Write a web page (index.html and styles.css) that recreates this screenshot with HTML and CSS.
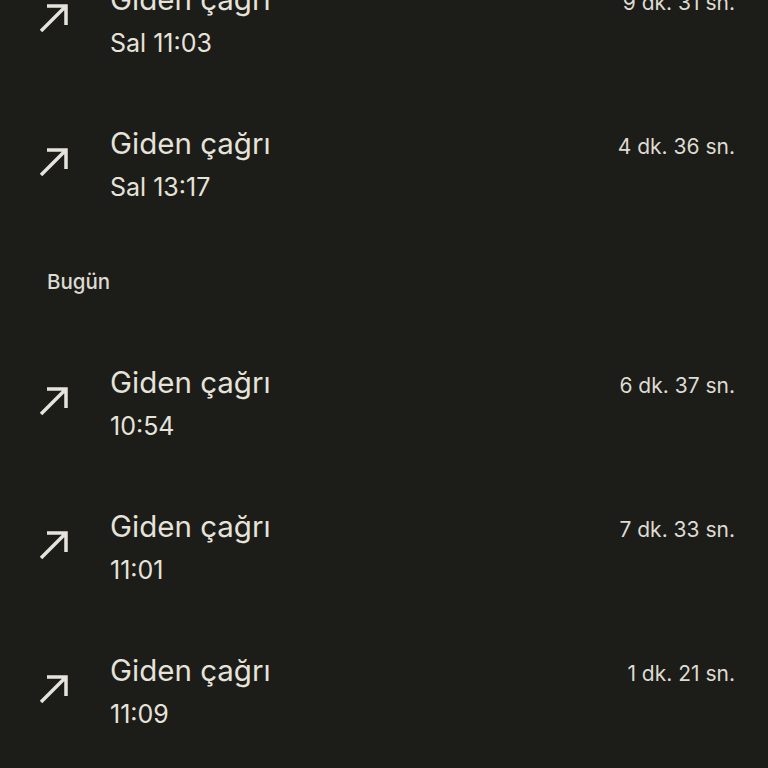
FILE: index.html
```html
<!DOCTYPE html>
<html lang="tr">
<head>
<meta charset="utf-8">
<link rel="stylesheet" href="styles.css">
</head>
<body>
<div class="list">
  <div class="row first">
    <svg class="icon" viewBox="0 0 32 32"><path d="M3 28 L28 3 M9 3 H28 V22" /></svg>
    <div class="text">
      <div class="top"><span class="title">Giden çağrı</span><span class="dur">9 dk. 31 sn.</span></div>
      <div class="sub">Sal 11:03</div>
    </div>
  </div>
  <div class="row">
    <svg class="icon" viewBox="0 0 32 32"><path d="M3 28 L28 3 M9 3 H28 V22" /></svg>
    <div class="text">
      <div class="top"><span class="title">Giden çağrı</span><span class="dur">4 dk. 36 sn.</span></div>
      <div class="sub">Sal 13:17</div>
    </div>
  </div>
  <div class="header">Bugün</div>
  <div class="row">
    <svg class="icon" viewBox="0 0 32 32"><path d="M3 28 L28 3 M9 3 H28 V22" /></svg>
    <div class="text">
      <div class="top"><span class="title">Giden çağrı</span><span class="dur">6 dk. 37 sn.</span></div>
      <div class="sub">10:54</div>
    </div>
  </div>
  <div class="row">
    <svg class="icon" viewBox="0 0 32 32"><path d="M3 28 L28 3 M9 3 H28 V22" /></svg>
    <div class="text">
      <div class="top"><span class="title">Giden çağrı</span><span class="dur">7 dk. 33 sn.</span></div>
      <div class="sub">11:01</div>
    </div>
  </div>
  <div class="row">
    <svg class="icon" viewBox="0 0 32 32"><path d="M3 28 L28 3 M9 3 H28 V22" /></svg>
    <div class="text">
      <div class="top"><span class="title">Giden çağrı</span><span class="dur">1 dk. 21 sn.</span></div>
      <div class="sub">11:09</div>
    </div>
  </div>
</div>
</body>
</html>
```
FILE: styles.css
```css
html, body {
  margin: 0;
  padding: 0;
  background: #1c1c19;
  overflow: hidden;
}
body {
  width: 768px;
  height: 768px;
  font-family: Inter, Roboto, sans-serif;
  color: #e6e3da;
}
.list {
  display: flex;
  flex-direction: column;
}
.row {
  height: 144px;
  display: flex;
  align-items: center;
  padding: 0 33px 0 38px;
  box-sizing: border-box;
}
.row.first {
  margin-top: -51px;
}
.icon {
  width: 32px;
  height: 32px;
  flex: none;
  margin-right: 40px;
  margin-top: -4px;
  fill: none;
  stroke: #e6e3da;
  stroke-width: 3.5;
  stroke-linecap: butt;
}
.text {
  flex: 1;
  display: flex;
  flex-direction: column;
}
.top {
  display: flex;
  justify-content: space-between;
  align-items: baseline;
  height: 44px;
  line-height: 44px;
}
.title {
  font-size: 29.5px;
}
.dur {
  font-size: 21px;
  color: #dedbd2;
}
.sub {
  font-size: 25px;
  line-height: 44px;
  height: 44px;
}
.header {
  height: 95px;
  box-sizing: border-box;
  padding: 33px 0 0 47px;
  line-height: 24px;
  font-size: 20.5px;
  font-weight: 500;
  color: #dcdad1;
}
```
